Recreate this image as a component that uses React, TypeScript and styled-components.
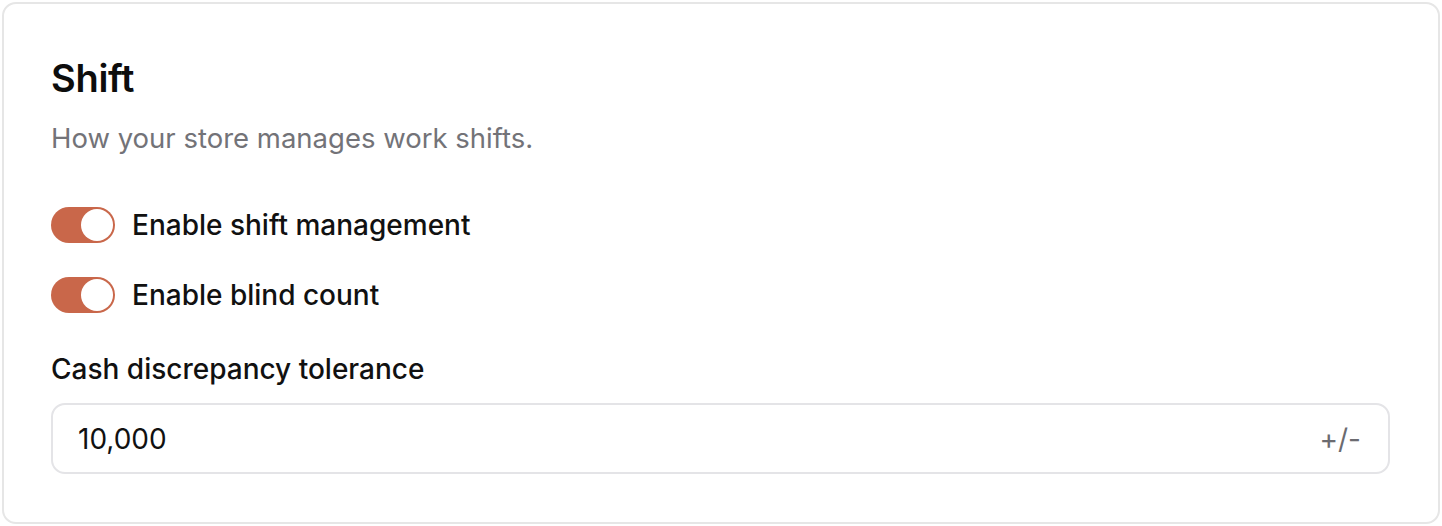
import React from "react";
import styled, { createGlobalStyle } from "styled-components";

const Global = createGlobalStyle`
  html, body { margin: 0; padding: 0; background: #ffffff; }
  body { font-family: Inter, "Noto Sans", sans-serif; color: #111111; }
`;

const Page = styled.div`
  padding: 2px;
  box-sizing: border-box;
  width: 1442px;
  height: 526px;
`;

const Card = styled.section`
  box-sizing: border-box;
  height: 522px;
  border: 2px solid #e6e6e6;
  border-radius: 14px;
  background: #ffffff;
  padding: 54px 48px 0 47px;
  display: flex;
  flex-direction: column;
`;

const Title = styled.h2`
  margin: 0;
  font-size: 38px;
  font-weight: 600;
  line-height: 40px;
  color: #0d0d0d;
  letter-spacing: -0.3px;
`;

const Subtitle = styled.p`
  margin: 24px 0 0;
  font-size: 27.5px;
  line-height: 32px;
  color: #737378;
`;

const Toggles = styled.div`
  margin-top: 53px;
  display: flex;
  flex-direction: column;
  gap: 34px;
`;

const ToggleRow = styled.label`
  display: flex;
  align-items: center;
  gap: 17px;
  height: 36px;
  font-size: 28px;
  font-weight: 500;
  color: #111111;
`;

const Track = styled.span<{ $on: boolean }>`
  box-sizing: border-box;
  width: 64px;
  height: 36px;
  border-radius: 18px;
  background: ${(p) => (p.$on ? "#c9674a" : "#d4d4d8")};
  padding: 2px;
  display: flex;
  justify-content: ${(p) => (p.$on ? "flex-end" : "flex-start")};
  flex-shrink: 0;
`;

const Thumb = styled.span`
  width: 32px;
  height: 32px;
  border-radius: 50%;
  background: #ffffff;
`;

const FieldLabel = styled.div`
  margin-top: 40px;
  font-size: 28px;
  line-height: 32px;
  font-weight: 500;
  color: #111111;
`;

const InputBox = styled.div`
  margin-top: 18px;
  box-sizing: border-box;
  height: 71px;
  border: 2px solid #e4e4e7;
  border-radius: 14px;
  display: flex;
  align-items: center;
  justify-content: space-between;
  padding: 0 27px 0 25px;
  font-size: 28px;
`;

const Value = styled.span`
  color: #111111;
`;

const Suffix = styled.span`
  color: #6b6b70;
`;

function Toggle({ label, on }: { label: string; on: boolean }) {
  return (
    <ToggleRow>
      <Track $on={on}>
        <Thumb />
      </Track>
      {label}
    </ToggleRow>
  );
}

export default function App() {
  return (
    <>
      <Global />
      <Page>
        <Card>
          <Title>Shift</Title>
          <Subtitle>How your store manages work shifts.</Subtitle>
          <Toggles>
            <Toggle label="Enable shift management" on />
            <Toggle label="Enable blind count" on />
          </Toggles>
          <FieldLabel>Cash discrepancy tolerance</FieldLabel>
          <InputBox>
            <Value>10,000</Value>
            <Suffix>+/-</Suffix>
          </InputBox>
        </Card>
      </Page>
    </>
  );
}
